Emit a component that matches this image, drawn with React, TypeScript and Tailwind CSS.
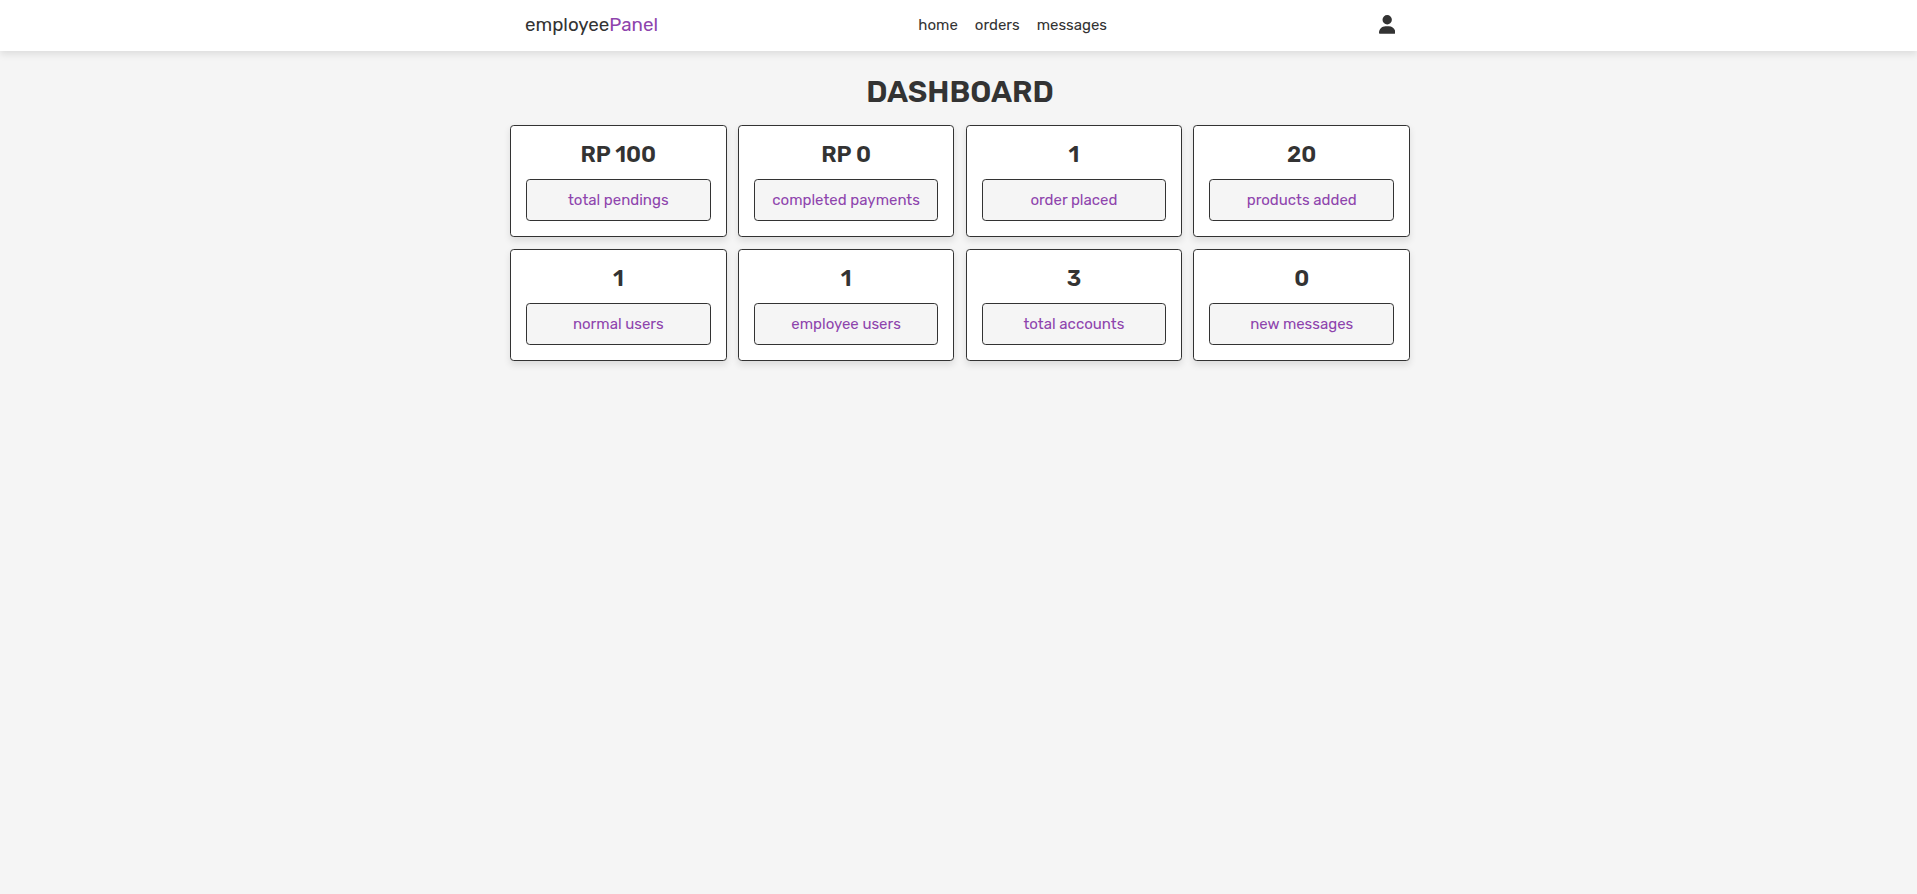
import { FaUser } from "react-icons/fa6";

const links = ["home", "orders", "messages"];

const stats = [
  { value: "RP 100", label: "total pendings" },
  { value: "RP 0", label: "completed payments" },
  { value: "1", label: "order placed" },
  { value: "20", label: "products added" },
  { value: "1", label: "normal users" },
  { value: "1", label: "employee users" },
  { value: "3", label: "total accounts" },
  { value: "0", label: "new messages" },
];

function Header() {
  return (
    <header className="h-[51px] bg-white pl-[3px] shadow-[0_3.75px_7.5px_rgba(0,0,0,0.1)]">
      <div className="mx-auto flex h-full w-[900px] items-center justify-between px-[15px] pb-[0.5px]">
        <a href="#" className="text-[18.75px] leading-[22px]">
          employee<span className="text-[#8e44ad]">Panel</span>
        </a>
        <nav className="flex gap-[17px] text-[15px] leading-[18px]">
          {links.map((link) => (
            <a key={link} href="#">
              {link}
            </a>
          ))}
        </nav>
        <button type="button" aria-label="Account" className="ml-[11.25px] pb-[2px]">
          <FaUser className="block h-[18.75px] w-[16.4px]" />
        </button>
      </div>
    </header>
  );
}

function StatCard({ value, label }: { value: string; label: string }) {
  return (
    <div className="rounded-[3.75px] border border-[#333] bg-white p-[15px] text-center shadow-[0_3.75px_7.5px_rgba(0,0,0,0.1)]">
      <h3 className="text-[22.5px] leading-[27px] font-semibold">{value}</h3>
      <p className="mt-[11px] rounded-[3.75px] border border-[#333] bg-[#f5f5f5] py-[11px] text-[15px] leading-[18px] text-[#8e44ad]">
        {label}
      </p>
    </div>
  );
}

export default function App() {
  return (
    <div className="min-h-screen overflow-hidden bg-[#f5f5f5] font-[Rubik,Roboto,sans-serif] text-[#333]">
      <Header />
      <main className="pl-[3px]">
        <section className="mx-auto w-[900px] pt-[23px]">
          <h1 className="mb-[15px] text-center text-[30px] leading-9 font-semibold">DASHBOARD</h1>
          <div className="grid grid-cols-4 gap-x-[11.25px] gap-y-3">
            {stats.map((stat) => (
              <StatCard key={stat.label} {...stat} />
            ))}
          </div>
        </section>
      </main>
    </div>
  );
}
